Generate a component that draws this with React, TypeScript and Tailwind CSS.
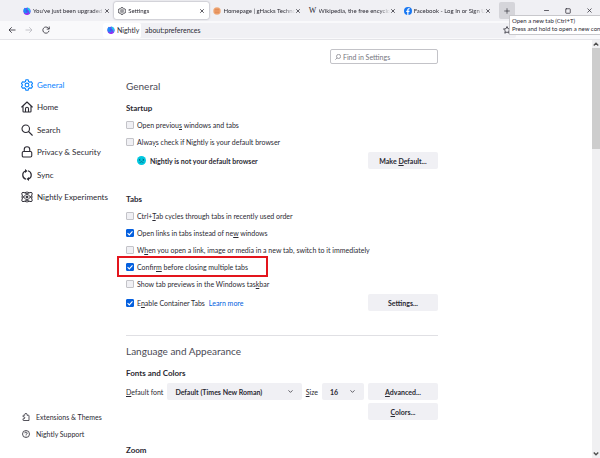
import type { ReactNode } from "react";
import { ChevronDown, Minus, Plus, Square, X } from "lucide-react";

function NightlyLogo() {
  return (
    <svg viewBox="0 0 16 16" className="size-2 shrink-0" aria-hidden="true">
      <circle cx="8" cy="8.5" r="7.2" fill="#6a48f5" />
      <path d="M1 7C1 4 2.500 2 4 1.500c0 1 .5 2 1.500 2.500L9 6l-1 6c-4 1-7-1-7-5z" fill="#1b8cf8" />
      <path d="M9 0c1 2 3 2 4.500 4 2 3 1.500 7-1 9 .8-3 .2-5-1.500-6.500C9.500 5 8.500 3 9 0z" fill="#12d6e8" />
      <circle cx="7.500" cy="8" r="2" fill="#3a5be8" />
      <path d="M3 12c3 2 7 2 10-1-1 4-3 5-5 5s-4-2-5-4z" fill="#a62bf0" />
    </svg>
  );
}

function GearIcon({ className }: { className: string }) {
  return (
    <svg viewBox="0 0 24 24" className={className} fill="none" stroke="currentColor" strokeWidth="2.2" strokeLinejoin="round" aria-hidden="true">
      <path d="M9.800 1.500h4.400l1 3.500 2.300 1.300 3.400-.9 2.200 3.800L20.700 12l2.400 2.800-2.200 3.800-3.400-.9-2.300 1.300-1 3.500H9.800l-1-3.500-2.300-1.300-3.400.9-2.200-3.800L3.300 12 .9 9.200l2.200-3.800 3.400.9L8.800 5z" />
      <circle cx="12" cy="12" r="3.800" />
    </svg>
  );
}

function GhacksLogo() {
  return (
    <svg viewBox="0 0 16 16" className="size-2 shrink-0" aria-hidden="true">
      <circle cx="8" cy="8" r="7.500" fill="#f0ac7c" />
      <path d="M3 5h10M2 8h12M3 11h10M6 2v12M10 2v12" stroke="#dc7c44" strokeWidth="1" />
    </svg>
  );
}

function FacebookLogo() {
  return (
    <svg viewBox="0 0 16 16" className="size-2 shrink-0" aria-hidden="true">
      <circle cx="8" cy="8" r="8" fill="#1877f2" />
      <path d="M8.900 16V9.800h2l.4-2.400H8.900V6c0-.8.4-1.300 1.400-1.300h1.200V2.600c-2.900-.6-5 .3-5 3v1.800H4.400v2.400h2.100V16z" fill="#fff" />
    </svg>
  );
}

const navIcon = "size-3 shrink-0";

const categories: { label: string; icon: ReactNode }[] = [
  { label: "General", icon: <GearIcon className={navIcon} /> },
  {
    label: "Home",
    icon: (
      <svg viewBox="0 0 24 24" className={navIcon} fill="none" stroke="currentColor" strokeWidth="2.2" strokeLinejoin="round" strokeLinecap="round">
        <path d="M1.500 12 12 2l10.500 10M4 10v10.500c0 1 .5 1.500 1.500 1.500h13c1 0 1.500-.5 1.500-1.500V10M9 22v-6.500a3 3 0 0 1 6 0V22" />
      </svg>
    ),
  },
  {
    label: "Search",
    icon: (
      <svg viewBox="0 0 24 24" className={navIcon} fill="none" stroke="currentColor" strokeWidth="2.2" strokeLinecap="round">
        <circle cx="9.500" cy="9.500" r="7.500" />
        <path d="m15 15 7.500 7.500" />
      </svg>
    ),
  },
  {
    label: "Privacy & Security",
    icon: (
      <svg viewBox="0 0 24 24" className={navIcon} fill="none" stroke="currentColor" strokeWidth="2.2">
        <rect x="2.500" y="11" width="19" height="11" rx="2.500" />
        <path d="M6.500 11V7a5.500 5.500 0 0 1 11 0v4" />
      </svg>
    ),
  },
  {
    label: "Sync",
    icon: (
      <svg viewBox="0 0 24 24" className={navIcon} fill="none" stroke="currentColor" strokeWidth="2.400">
        <path d="M10 20.500C1.500 18 1.500 6.500 9 4M14 3.500c8.500 2.500 8.500 14 1 16.500" />
        <path d="M8 0v8l5-4zM16 24v-8l-5 4z" fill="currentColor" stroke="none" />
      </svg>
    ),
  },
  {
    label: "Nightly Experiments",
    icon: (
      <svg viewBox="0 0 24 24" className={navIcon} fill="none" stroke="currentColor" strokeWidth="1.800">
        <ellipse cx="12" cy="12" rx="13" ry="5" transform="rotate(40 12 12)" />
        <ellipse cx="12" cy="12" rx="13" ry="5" transform="rotate(-40 12 12)" />
        <path d="M7 3.500a10 10 0 0 1 10 0M7 20.500a10 10 0 0 0 10 0M2.500 9a10 10 0 0 0 0 6M21.500 9a10 10 0 0 1 0 6" />
        <circle cx="12" cy="12" r="2" fill="currentColor" />
      </svg>
    ),
  },
];

const tabs = [
  { title: "You've just been upgraded", icon: <NightlyLogo /> },
  { title: "Settings", icon: <GearIcon className="size-2 shrink-0" />, active: true },
  { title: "Homepage | gHacks Techno", icon: <GhacksLogo /> },
  { title: "Wikipedia, the free encyclo", icon: <span className="w-2 shrink-0 text-center font-['Liberation_Serif',serif] text-[8px]">W</span> },
  { title: "Facebook - Log In or Sign U", icon: <FacebookLogo /> },
];

function BrowserTab({ title, icon, active }: { title: string; icon: ReactNode; active?: boolean }) {
  return (
    <div
      className={
        active
          ? "flex h-[17px] min-w-0 flex-1 items-center rounded-xs bg-white px-1 shadow-[0_0_2px_#80808e]"
          : "flex h-[17px] min-w-0 flex-1 items-center px-1"
      }
    >
      {icon}
      <span className="ml-[2px] min-w-0 flex-1 overflow-hidden whitespace-nowrap mask-r-from-85%">{title}</span>
      <button aria-label={`Close ${title}`}>
        <X className="size-[6px]" strokeWidth={3} />
      </button>
    </div>
  );
}

function Check({ id, checked, children }: { id: string; checked?: boolean; children: ReactNode }) {
  return (
    <div className="flex h-[13px] items-center gap-[3px]">
      <span className="relative flex size-2">
        <input
          id={id}
          type="checkbox"
          defaultChecked={checked}
          className="peer size-2 appearance-none rounded-[1px] border border-[#c3c3c8] bg-[#f0f0f4] checked:border-[#0560df] checked:bg-[#0560df]"
        />
        <svg viewBox="0 0 8 8" className="pointer-events-none absolute inset-0 hidden size-2 peer-checked:block" fill="none" stroke="#fff" strokeWidth="1.100">
          <path d="m1.600 4.200 1.700 1.700L6.500 2.300" />
        </svg>
      </span>
      <label htmlFor={id} className="whitespace-nowrap">{children}</label>
    </div>
  );
}

function Button({ children }: { children: ReactNode }) {
  return (
    <button className="h-[17px] w-[70px] shrink-0 rounded-xs bg-[#f0f0f4] font-bold hover:bg-[#e0e0e6]">
      {children}
    </button>
  );
}

function Select({ id, options, className }: { id: string; options: string[]; className: string }) {
  return (
    <span className={`relative flex ${className}`}>
      <select id={id} className="h-[17px] w-full appearance-none rounded-xs bg-[#f0f0f4] pl-2 font-bold">
        {options.map((o) => (
          <option key={o}>{o}</option>
        ))}
      </select>
      <ChevronDown className="pointer-events-none absolute top-[5px] right-2 size-[7px]" strokeWidth={2.5} />
    </span>
  );
}

function Key({ children }: { children: string }) {
  return <span className="underline decoration-1 underline-offset-1">{children}</span>;
}

export default function App() {
  return (
    <div className="relative flex h-screen flex-col overflow-hidden bg-white font-['Lato','Open_Sans',sans-serif] text-[7px] leading-[12px] text-[#2b2a33]">
      <header>
        <div className="flex h-[21px] items-center bg-[#f0f0f4] pl-[19px] text-[6px]">
          <div className="flex min-w-0 flex-1">
            {tabs.map((t) => (
              <BrowserTab key={t.title} {...t} />
            ))}
          </div>
          <button aria-label="New tab" className="ml-1 flex h-[17px] w-4 items-center justify-center rounded-xs bg-[#d5d5da]">
            <Plus className="size-2" strokeWidth={2} />
          </button>
          <div className="flex w-[85px] items-center justify-between pr-[7px] pl-[28px]">
            <button aria-label="Minimize"><Minus className="size-[7px]" strokeWidth={2.5} /></button>
            <button aria-label="Maximize"><Square className="size-[6px]" strokeWidth={3} /></button>
            <button aria-label="Close"><X className="size-[7px]" strokeWidth={2.5} /></button>
          </div>
        </div>
        <div className="flex h-[19px] items-center border-b border-[#e4e4e8] bg-[#f9f9fb] pl-2">
          <div className="flex w-[95px] gap-[9px]">
            <button aria-label="Back">
              <svg viewBox="0 0 16 16" className="size-2" fill="none" stroke="currentColor" strokeWidth="1.600"><path d="M15 8H2M7.500 2.500 2 8l5.500 5.500" /></svg>
            </button>
            <button aria-label="Forward" className="text-[#b8b8bf]">
              <svg viewBox="0 0 16 16" className="size-2" fill="none" stroke="currentColor" strokeWidth="1.600"><path d="M1 8h13M8.500 2.500 14 8l-5.500 5.500" /></svg>
            </button>
            <button aria-label="Reload">
              <svg viewBox="0 0 16 16" className="size-2" fill="none" stroke="currentColor" strokeWidth="1.600"><path d="M14 9.500A6.200 6.200 0 1 1 12.500 4L14.500 6M14.500 1v5.200H9.500" /></svg>
            </button>
          </div>
          <div className="flex h-[15px] min-w-0 flex-1 items-center rounded-xs bg-[#f0f0f4]">
            <span className="flex h-[15px] w-[38px] items-center gap-[2px] rounded-xs bg-white pl-1">
              <NightlyLogo />
              Nightly
            </span>
            <input aria-label="Address" defaultValue="about:preferences" className="min-w-0 flex-1 bg-transparent pl-1 outline-none" />
            <button aria-label="Bookmark this page" className="pr-[5px]">
              <svg viewBox="0 0 16 16" className="size-2" fill="none" stroke="currentColor" strokeWidth="1.600" strokeLinejoin="round"><path d="m8 1 2.100 4.500 4.900.6-3.600 3.400 1 4.900L8 12l-4.400 2.400 1-4.900L1 6.100l4.900-.6z" /></svg>
            </button>
          </div>
          <div className="w-[84px]" />
        </div>
      </header>

      <div role="tooltip" className="absolute top-[15px] left-[509px] border border-[#c8c8cc] bg-white py-px pl-[2px] text-[6px] leading-[8px] whitespace-nowrap">
        <p>Open a new tab (Ctrl+T)</p>
        <p>Press and hold to open a new conta</p>
      </div>

      <div className="flex min-h-0 flex-1">
        <aside className="flex w-[126px] shrink-0 flex-col justify-between pt-[39px] pb-[18px] pl-[21px]">
          <nav className="flex h-[124px] flex-col justify-between text-[8px]">
            {categories.map((c, i) => (
              <a key={c.label} href="#" className={i === 0 ? "flex items-center gap-1 text-[#0a84ff]" : "flex items-center gap-1"}>
                {c.icon}
                {c.label}
              </a>
            ))}
          </nav>
          <div className="flex flex-col gap-[5px] pl-px">
            <a href="#" className="flex items-center gap-[6px]">
              <svg viewBox="0 0 16 16" className="size-2" fill="none" stroke="currentColor" strokeWidth="1.600" strokeLinejoin="round">
                <path d="M5.500 4.500V3a2 2 0 0 1 4.500 0v1.500h3c.6 0 1 .4 1 1V15H3c-.6 0-1-.4-1-1v-2.500h1.500a2 2 0 0 0 0-4H2v-2c0-.6.4-1 1-1z" />
              </svg>
              Extensions &amp; Themes
            </a>
            <a href="#" className="flex items-center gap-[6px]">
              <svg viewBox="0 0 16 16" className="size-2" fill="none" stroke="currentColor" strokeWidth="1.600">
                <circle cx="8" cy="8" r="7" />
                <path d="M5.800 6.500a2.200 2.200 0 1 1 3.500 1.700C8.300 8.900 8 9 8 10M8 11.200v1.500" />
              </svg>
              Nightly Support
            </a>
          </div>
        </aside>

        <main className="min-w-0 flex-1">
          <div className="max-w-[312px] pt-[9px]">
            <div className="ml-auto flex h-[15px] w-[108px] items-center gap-[2px] rounded-xs border border-[#c3c3c8] px-1 text-[#75757e]">
              <svg viewBox="0 0 16 16" className="size-[6px]" fill="none" stroke="currentColor" strokeWidth="1.800">
                <circle cx="9.500" cy="6.500" r="5.500" />
                <path d="M5.500 10.500 1 15" />
              </svg>
              <input aria-label="Find in Settings" placeholder="Find in Settings" className="min-w-0 flex-1 outline-none placeholder:text-[#75757e]" />
            </div>

            <h1 className="mt-[14px] mb-2 text-[10px] leading-4 text-[#4a4a55]">General</h1>

            <section>
              <h2 className="mb-1 text-[8px] font-bold">Startup</h2>
              <div className="flex flex-col gap-1">
                <Check id="restore">Open previou<Key>s</Key> windows and tabs</Check>
                <Check id="always">Alwa<Key>y</Key>s check if Nightly is your default browser</Check>
                <div className="flex items-center justify-between pl-[11px]">
                  <p className="flex items-center gap-1 font-bold">
                    <svg viewBox="0 0 16 16" className="size-[9px]" aria-hidden="true">
                      <circle cx="8" cy="8" r="8" fill="#00c8e0" />
                      <path d="M3.500 6.500 6 5.500M12.500 6.500 10 5.500M5 12c1.500-2.500 4.500-2.500 6 0" fill="none" stroke="#0b4a66" strokeWidth="1.300" />
                      <circle cx="5" cy="7.500" r="1" fill="#0b4a66" />
                      <circle cx="11" cy="7.500" r="1" fill="#0b4a66" />
                    </svg>
                    Nightly is not your default browser
                  </p>
                  <Button>Make <Key>D</Key>efault...</Button>
                </div>
              </div>
            </section>

            <section className="mt-6">
              <h2 className="mb-1 text-[8px] font-bold">Tabs</h2>
              <div className="flex flex-col gap-1">
                <Check id="cycle">Ctrl+<Key>T</Key>ab cycles through tabs in recently used order</Check>
                <Check id="links" checked>Open links in tabs instead of ne<Key>w</Key> windows</Check>
                <Check id="switch">W<Key>h</Key>en you open a link, image or media in a new tab, switch to it immediately</Check>
                <div className="relative">
                  <Check id="confirm" checked>Confir<Key>m</Key> before closing multiple tabs</Check>
                  <span className="pointer-events-none absolute -top-1 -left-[9px] h-[21px] w-[151px] border-2 border-[#e3151d]" />
                </div>
                <Check id="previews">Show tab previews in the Windows tas<Key>k</Key>bar</Check>
                <div className="flex items-center justify-between">
                  <div className="flex items-center gap-1">
                    <Check id="containers" checked>E<Key>n</Key>able Container Tabs</Check>
                    <a href="#" className="text-[#0061e0]">Learn more</a>
                  </div>
                  <Button>Sett<Key>i</Key>ngs...</Button>
                </div>
              </div>
            </section>

            <h1 className="mt-6 mb-2 border-t border-[#e0e0e4] pt-[7px] text-[10px] leading-4 text-[#4a4a55]">Language and Appearance</h1>

            <section>
              <h2 className="mb-1 text-[8px] font-bold">Fonts and Colors</h2>
              <div className="flex items-center gap-1">
                <label htmlFor="font" className="shrink-0"><Key>D</Key>efault font</label>
                <Select id="font" options={["Default (Times New Roman)"]} className="min-w-0 flex-1" />
                <label htmlFor="size"><Key>S</Key>ize</label>
                <Select id="size" options={["16"]} className="w-[42px]" />
                <Button><Key>A</Key>dvanced...</Button>
              </div>
              <div className="mt-[3px] flex justify-end">
                <Button><Key>C</Key>olors...</Button>
              </div>
            </section>

            <section className="mt-6">
              <h2 className="text-[8px] font-bold">Zoom</h2>
            </section>
          </div>
        </main>

        <div className="flex w-2 shrink-0 flex-col items-center bg-[#f0f0f2] py-px">
          <svg viewBox="0 0 8 8" className="size-[6px] shrink-0" fill="none" stroke="#505050" strokeWidth="1.800"><path d="m1 6 3-3 3 3" /></svg>
          <div className="mt-px h-[101px] w-full bg-[#cdcdcd]" />
          <svg viewBox="0 0 8 8" className="mt-auto size-[6px] shrink-0" fill="none" stroke="#505050" strokeWidth="1.800"><path d="m1 2 3 3 3-3" /></svg>
        </div>
      </div>
    </div>
  );
}
